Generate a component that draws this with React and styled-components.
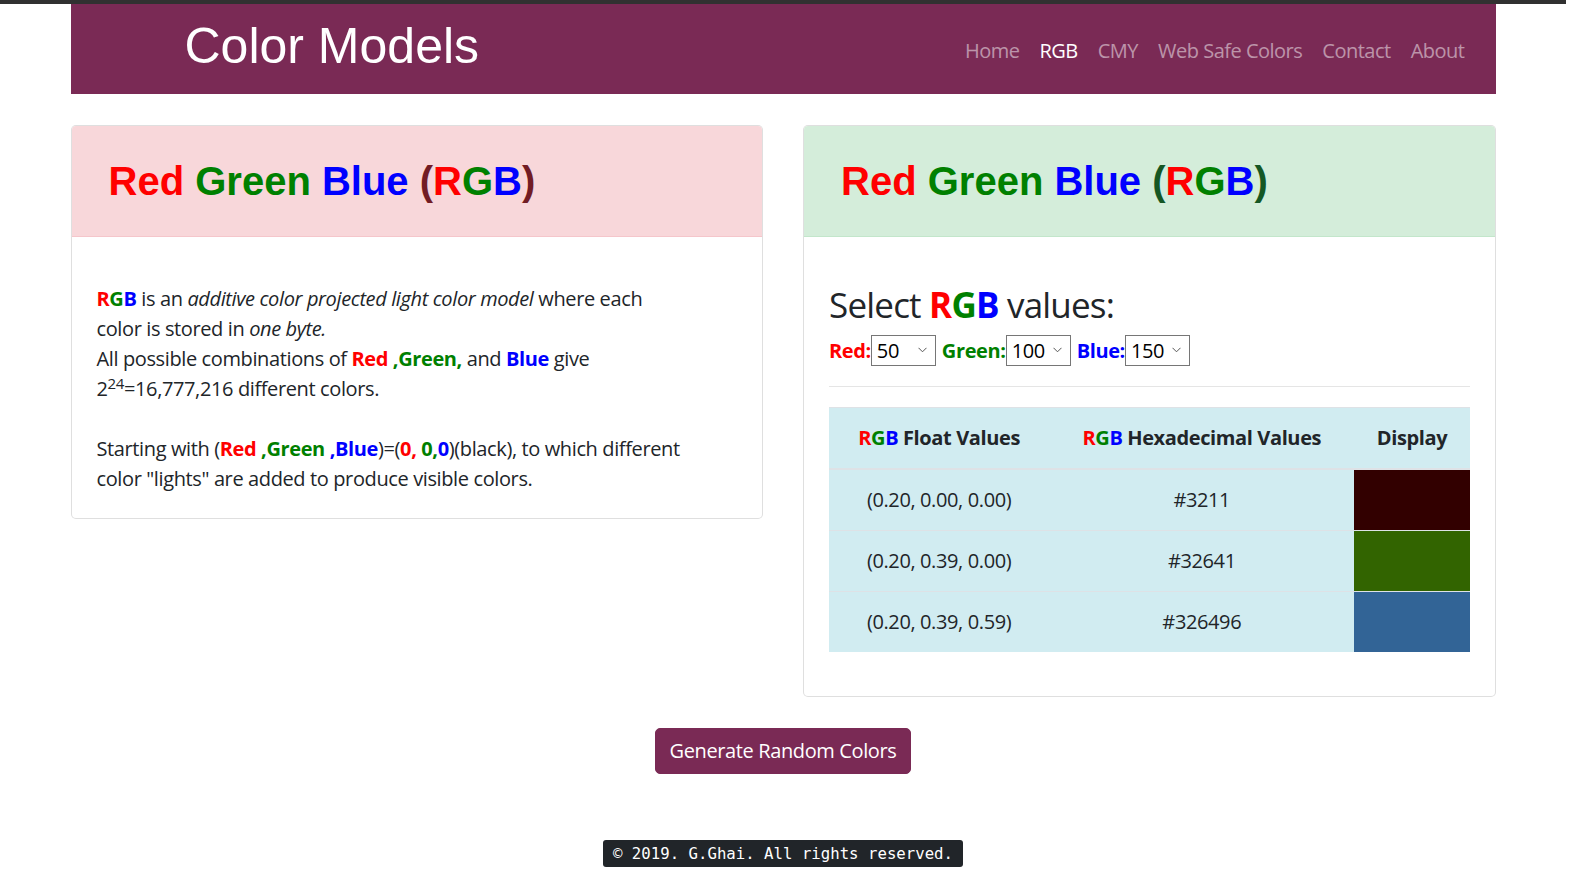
import React from 'react';
import styled, { createGlobalStyle } from 'styled-components';

const GlobalStyle = createGlobalStyle`
  html, body {
    margin: 0;
    padding: 0;
    background: #fff;
  }
  body {
    font-family: "Open Sans", "Noto Sans", Arial, sans-serif;
    font-size: 20px;
    line-height: 1.5;
    letter-spacing: -0.38px;
    color: #212529;
  }
`;

const TopStrip = styled.div`
  height: 4px;
  background: #313131;
`;

const Page = styled.div`
  width: 1566px;
`;

const Container = styled.div`
  width: 1425px;
  margin: 0 auto;
`;

const Navbar = styled.header`
  display: flex;
  justify-content: space-between;
  align-items: flex-start;
  height: 90px;
  padding: 0 21px 0 114px;
  box-sizing: border-box;
  background: #7a2a55;
`;

const Brand = styled.h1`
  margin: 12px 0 0;
  font-family: "Liberation Sans", Arial, sans-serif;
  font-weight: 400;
  font-size: 50px;
  line-height: 60px;
  letter-spacing: 0;
  color: #fff;
`;

const NavList = styled.nav`
  display: flex;
  margin-top: 32px;
`;

const NavLink = styled.a`
  padding: 0 10px;
  line-height: 30px;
  letter-spacing: -0.5px;
  color: ${p => (p.$active ? '#fff' : 'rgba(255, 255, 255, 0.5)')};
  text-decoration: none;
`;

const Columns = styled.main`
  display: grid;
  grid-template-columns: 1fr 1fr;
  gap: 40px;
  align-items: start;
  margin-top: 31px;
`;

const Card = styled.section`
  border: 1px solid rgba(0, 0, 0, 0.125);
  border-radius: 5px;
  background: #fff;
  overflow: hidden;
`;

const CardHeader = styled.div`
  padding: 31px 37px;
  background: ${p => (p.$tone === 'green' ? '#d4edda' : '#f8d7da')};
  border-bottom: 1px solid ${p => (p.$tone === 'green' ? '#c3e6cb' : '#f5c6cb')};
`;

const Title = styled.h2`
  margin: 0;
  font-family: "Liberation Sans", Arial, sans-serif;
  font-weight: 700;
  font-size: 40px;
  line-height: 48px;
  letter-spacing: 0;
  color: ${p => p.$paren};
`;

const CardBody = styled.div`
  padding: ${p => p.$top}px 25px 24px;
`;

const Text = styled.p`
  margin: 0;
  max-width: 590px;
`;

const Ink = styled.span`
  color: ${p => p.$c};
  font-weight: ${p => (p.$bold ? 700 : 'inherit')};
`;

const Sup = styled.sup`
  font-size: 75%;
  line-height: 0;
  position: relative;
  vertical-align: baseline;
  top: -0.5em;
`;

const SelectHeading = styled.h3`
  margin: 0 0 9px;
  font-weight: 400;
  font-size: 35px;
  line-height: 42px;
  letter-spacing: -0.8px;
`;

const PickerRow = styled.div`
  display: flex;
  align-items: center;
  gap: 6px;
  height: 31px;
`;

const Picker = styled.label`
  display: flex;
  align-items: center;
  font-weight: 700;
  color: ${p => p.$c};
`;

const SelectWrap = styled.span`
  position: relative;
  display: inline-block;
`;

const Select = styled.select`
  appearance: none;
  width: 65px;
  height: 31px;
  padding: 0 0 0 5px;
  border: 1px solid #767676;
  border-radius: 0;
  background: #fff;
  font-family: inherit;
  font-size: 20px;
  letter-spacing: -0.38px;
  color: #000;
`;

const Chevron = styled.svg`
  position: absolute;
  right: 9px;
  top: 12px;
  pointer-events: none;
`;

const Rule = styled.hr`
  margin: 20px 0;
  border: 0;
  border-top: 1px solid rgba(0, 0, 0, 0.1);
`;

const Table = styled.table`
  width: 100%;
  border-collapse: collapse;
  table-layout: fixed;
  background: #d1ecf1;
  margin-bottom: 20px;
`;

const Th = styled.th`
  padding: 15px;
  text-align: center;
  font-weight: 700;
  border-top: 1px solid #dee2e6;
  border-bottom: 2px solid #dee2e6;
  white-space: nowrap;
`;

const Td = styled.td`
  padding: 15px;
  text-align: center;
  border-top: 1px solid #dee2e6;
  background: ${p => p.$swatch || 'transparent'};
`;

const ActionRow = styled.div`
  display: flex;
  justify-content: center;
  margin-top: 31px;
`;

const Button = styled.button`
  padding: 7px 14px;
  border: 1px solid #7a2a55;
  border-radius: 5px;
  background: #7a2a55;
  color: #fff;
  font-family: inherit;
  font-size: 20px;
  line-height: 30px;
  letter-spacing: -0.38px;
`;

const Footer = styled.footer`
  display: flex;
  justify-content: center;
  margin-top: 66px;
  padding-bottom: 22px;
`;

const Kbd = styled.kbd`
  padding: 2px 10px;
  border-radius: 3px;
  background: #212529;
  color: #fff;
  font-family: "DejaVu Sans Mono", "Liberation Mono", monospace;
  font-size: 15.7px;
  line-height: 23px;
  letter-spacing: 0;
`;

const RED = '#ff0000';
const GREEN = '#008000';
const BLUE = '#0000ff';

const Rgb = () => (
  <>
    <Ink $c={RED} $bold>R</Ink>
    <Ink $c={GREEN} $bold>G</Ink>
    <Ink $c={BLUE} $bold>B</Ink>
  </>
);

const CardTitle = ({ paren }) => (
  <Title $paren={paren}>
    <Ink $c={RED}>Red</Ink> <Ink $c={GREEN}>Green</Ink> <Ink $c={BLUE}>Blue</Ink> (
    <Ink $c={RED}>R</Ink>
    <Ink $c={GREEN}>G</Ink>
    <Ink $c={BLUE}>B</Ink>)
  </Title>
);

const pickers = [
  { label: 'Red:', color: RED, value: 50 },
  { label: 'Green:', color: GREEN, value: 100 },
  { label: 'Blue:', color: BLUE, value: 150 },
];

const rows = [
  { float: '(0.20, 0.00, 0.00)', hex: '#3211', swatch: 'rgb(50, 0, 0)' },
  { float: '(0.20, 0.39, 0.00)', hex: '#32641', swatch: 'rgb(50, 100, 0)' },
  { float: '(0.20, 0.39, 0.59)', hex: '#326496', swatch: 'rgb(50, 100, 150)' },
];

const options = [0, 50, 100, 150, 200, 250];

export default function App() {
  return (
    <Page>
      <GlobalStyle />
      <TopStrip />
      <Container>
        <Navbar>
          <Brand>Color Models</Brand>
          <NavList>
            <NavLink href="#">Home</NavLink>
            <NavLink href="#" $active>RGB</NavLink>
            <NavLink href="#">CMY</NavLink>
            <NavLink href="#">Web Safe Colors</NavLink>
            <NavLink href="#">Contact</NavLink>
            <NavLink href="#">About</NavLink>
          </NavList>
        </Navbar>

        <Columns>
          <Card>
            <CardHeader $tone="red">
              <CardTitle paren="#721c24" />
            </CardHeader>
            <CardBody $top={47}>
              <Text>
                <Rgb /> is an <em>additive color projected light color model</em> where each
                color is stored in <em>one byte.</em>
                <br />
                All possible combinations of <Ink $c={RED} $bold>Red</Ink>{' '}
                <Ink $c={GREEN} $bold>,Green,</Ink> and <Ink $c={BLUE} $bold>Blue</Ink> give
                2<Sup>24</Sup>=16,777,216 different colors.
                <br />
                <br />
                Starting with (<Ink $c={RED} $bold>Red</Ink> <Ink $c={GREEN} $bold>,Green</Ink>{' '}
                <Ink $c={BLUE} $bold>,Blue</Ink>)=(<Ink $c={RED} $bold>0,</Ink>{' '}
                <Ink $c={GREEN} $bold>0,</Ink>
                <Ink $c={BLUE} $bold>0</Ink>)(black), to which different color "lights" are
                added to produce visible colors.
              </Text>
            </CardBody>
          </Card>

          <Card>
            <CardHeader $tone="green">
              <CardTitle paren="#155724" />
            </CardHeader>
            <CardBody $top={47}>
              <SelectHeading>
                Select <Rgb /> values:
              </SelectHeading>
              <PickerRow>
                {pickers.map(p => (
                  <Picker key={p.label} $c={p.color}>
                    {p.label}
                    <SelectWrap>
                      <Select defaultValue={p.value}>
                        {options.map(o => (
                          <option key={o} value={o}>{o}</option>
                        ))}
                      </Select>
                      <Chevron width="9" height="6" viewBox="0 0 9 6">
                        <path d="M0.5 0.8 L4.5 4.8 L8.5 0.8" fill="none" stroke="#555" strokeWidth="1" />
                      </Chevron>
                    </SelectWrap>
                  </Picker>
                ))}
              </PickerRow>
              <Rule />
              <Table>
                <colgroup>
                  <col style={{ width: '220px' }} />
                  <col style={{ width: '305px' }} />
                  <col style={{ width: '115px' }} />
                </colgroup>
                <thead>
                  <tr>
                    <Th><Rgb /> Float Values</Th>
                    <Th><Rgb /> Hexadecimal Values</Th>
                    <Th>Display</Th>
                  </tr>
                </thead>
                <tbody>
                  {rows.map(r => (
                    <tr key={r.hex}>
                      <Td>{r.float}</Td>
                      <Td>{r.hex}</Td>
                      <Td $swatch={r.swatch} />
                    </tr>
                  ))}
                </tbody>
              </Table>
            </CardBody>
          </Card>
        </Columns>

        <ActionRow>
          <Button type="button">Generate Random Colors</Button>
        </ActionRow>

        <Footer>
          <Kbd>© 2019. G.Ghai. All rights reserved.</Kbd>
        </Footer>
      </Container>
    </Page>
  );
}
